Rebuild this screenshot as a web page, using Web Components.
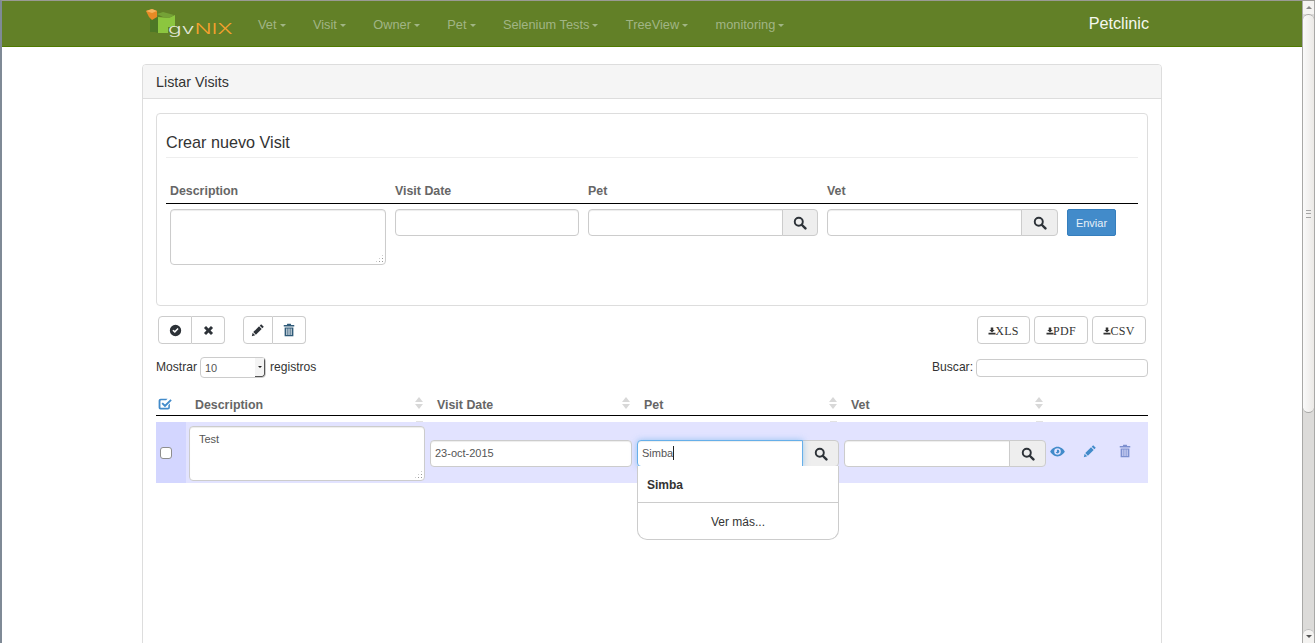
<!DOCTYPE html>
<html lang="es">
<head>
<meta charset="utf-8">
<title>Petclinic</title>
<style>
  html, body { margin: 0; height: 643px; overflow: hidden; background: #fff; }
  body { font: 12px "Liberation Sans", Arial, sans-serif; color: #333; }
</style>
</head>
<body>
<gv-page>
  <gv-navbar brand="Petclinic">
    <gv-nav-item>Vet</gv-nav-item>
    <gv-nav-item>Visit</gv-nav-item>
    <gv-nav-item>Owner</gv-nav-item>
    <gv-nav-item>Pet</gv-nav-item>
    <gv-nav-item>Selenium Tests</gv-nav-item>
    <gv-nav-item>TreeView</gv-nav-item>
    <gv-nav-item>monitoring</gv-nav-item>
  </gv-navbar>
  <gv-panel heading="Listar Visits">
    <gv-create-form></gv-create-form>
    <gv-toolbar></gv-toolbar>
    <gv-table-controls></gv-table-controls>
    <gv-visit-table></gv-visit-table>
  </gv-panel>
</gv-page>

<script>
const ICONS = {
  search: `<circle cx="6.6" cy="6.6" r="4.6" fill="none" stroke="currentColor" stroke-width="2.2"/><path d="M10 10 14.200 14.200" stroke="currentColor" stroke-width="2.8" stroke-linecap="round"/>`,
  okcircle: `<path fill-rule="evenodd" d="M8 1a7 7 0 1 1 0 14A7 7 0 0 1 8 1zM5.400 7 4.200 8.400 7.200 11l4.600-4.800-1.300-1.200-3.300 3.400z"/>`,
  remove: `<path d="M4.400 1.400 8 5l3.600-3.600 3 3L11 8l3.600 3.600-3 3L8 11l-3.600 3.600-3-3L5 8 1.400 4.400z"/>`,
  pencil: `<path d="M11.600 1.400 14.600 4.400 13 6 10 3zM9.200 3.800l3 3L5.600 13.400l-3-3zM1.900 11.200l2.900 2.900-3.900 1z"/>`,
  trash: `<path fill-rule="evenodd" d="M6 .8h4l.5 1.400H14v1.700H2V2.200h3.500zM3 5h10v10.200H3zM5 6.400v7.400h1.100V6.400zm2.400 0v7.400h1.200V6.400zm2.500 0v7.400H11V6.400z"/>`,
  download: `<path d="M5.500 1h5v5h3L8 11 2.500 6h3zM1 11.500h14V15H1z"/>`,
  eye: `<path fill-rule="evenodd" d="M8 2.800c3.600 0 6.500 2.700 7.800 5.200-1.300 2.500-4.200 5.200-7.800 5.200S1.500 10.500.2 8C1.500 5.500 4.400 2.800 8 2.800zm0 1.700a3.500 3.500 0 1 0 0 7 3.500 3.500 0 0 0 0-7zM8 6a2 2 0 1 1-1.900 2.600c.8.300 1.700-.5 1.300-1.300-.2-.4-.2-1 .6-1.300z"/>`,
  check: `<path fill-rule="evenodd" d="M3 2h8l-1.800 1.800H3.500c-.4 0-.7.300-.7.700v7.200c0 .4.300.7.700.7h7.600c.4 0 .7-.3.700-.7V9.300l1.800-1.800v4.600c0 1.300-1 2.300-2.300 2.300H3c-1.300 0-2.300-1-2.300-2.300V4.300C.7 3 1.700 2 3 2zm11.200.6 1.500 1.500L8 11.700 4 7.800l1.500-1.500L8 8.700z"/>`
};

class GvIcon extends HTMLElement {
  constructor() {
    super();
    this.attachShadow({ mode: "open" });
  }
  connectedCallback() {
    const size = this.getAttribute("size") || 14;
    this.shadowRoot.innerHTML = `
      <style>
        :host { display: inline-flex; flex: none; }
        svg { display: block; fill: currentColor; }
      </style>
      <svg width="${size}" height="${size}" viewBox="0 0 16 16">${ICONS[this.getAttribute("name")]}</svg>`;
  }
}
customElements.define("gv-icon", GvIcon);

class GvPage extends HTMLElement {
  constructor() {
    super();
    this.attachShadow({ mode: "open" });
    this.shadowRoot.innerHTML = `
      <style>
        :host { display: flex; height: 643px; overflow: hidden; box-sizing: border-box; border-top: 1px solid #9a9a94; border-left: 2px solid #7f8a96; }
        main { flex: 1; min-width: 0; }
        gv-scrollbar { flex: none; }
      </style>
      <main><slot></slot></main>
      <gv-scrollbar></gv-scrollbar>`;
  }
}

class GvScrollbar extends HTMLElement {
  constructor() {
    super();
    this.attachShadow({ mode: "open" });
    this.shadowRoot.innerHTML = `
      <style>
        :host { display: flex; flex-direction: column; width: 13px; box-sizing: border-box; height: 642px; background: #dcdbd9; border: solid #a9a9a7; border-width: 0 1px; }
        .arrow { height: 13px; background: #f4f3f1; display: flex; align-items: center; justify-content: center; flex: none; }
        .arrow i { width: 0; height: 0; border: 3.500px solid transparent; }
        .up i { border-bottom-color: #8a8a8a; border-top: 0; }
        .down i { border-top-color: #555; border-bottom: 0; }
        .thumb { height: 399px; flex: none; box-sizing: border-box; border: 1px solid #a9a9a7; border-width: 1px 0; border-radius: 6px; background: linear-gradient(90deg, #fafafa, #ebe9e6); display: flex; align-items: center; justify-content: center; }
        .thumb i { width: 5px; height: 6px; border-top: 1px solid #a5a5a5; border-bottom: 1px solid #a5a5a5; background: linear-gradient(#a5a5a5, #a5a5a5) center / 100% 1px no-repeat; }
        .track { flex: 1; }
        .down { border-radius: 6px 6px 0 0; border-top: 1px solid #bbb; }
      </style>
      <div class="arrow up"><i></i></div>
      <div class="thumb"><i></i></div>
      <div class="track"></div>
      <div class="arrow down"><i></i></div>`;
  }
}

class GvLogo extends HTMLElement {
  constructor() {
    super();
    this.attachShadow({ mode: "open" });
    this.shadowRoot.innerHTML = `
      <style>
        :host { display: flex; align-items: flex-end; height: 29px; width: 86px; flex: none; }
        svg { display: block; flex: none; align-self: flex-start; }
        .word { font: 300 14px/12px Inter, "Liberation Sans", sans-serif; margin: 0 0 0 -7px; transform: scaleX(1.62); transform-origin: left bottom; white-space: nowrap; padding-bottom: 3px; }
        .gv { color: #e4e8da; }
        .nix { color: #f7a02e; }
      </style>
      <svg width="29" height="29" viewBox="0 0 29 29">
        <path fill="#4d7826" d="M4 10l8-2v16l-3-1H4z"/>
        <path fill="#75a236" d="M11 5l6-2 11 3-5 3-6-1z"/>
        <path fill="#8cc63f" d="M12 8l11 1 6-3v12H22v6H12z"/>
        <path fill="#e88a25" d="M0 2 6 0l5 2v6l-5 3-3-3z"/>
        <path fill="#f5b35c" d="M0 2 6 0l5 2-5 2z"/>
      </svg>
      <span class="word"><span class="gv">gv</span><span class="nix">NIX</span></span>`;
  }
}

class GvNavItem extends HTMLElement {
  constructor() {
    super();
    this.attachShadow({ mode: "open" });
    this.shadowRoot.innerHTML = `
      <style>
        :host { display: inline-flex; align-items: center; padding: 1px 13.700px 0; color: #a1b585; font-size: 12.800px; white-space: nowrap; }
        i { margin-left: 3px; width: 0; height: 0; border: 3px solid transparent; border-top-color: #a1b585; border-bottom: 0; margin-top: 2px; }
      </style>
      <slot></slot><i></i>`;
  }
}

class GvNavbar extends HTMLElement {
  constructor() {
    super();
    this.attachShadow({ mode: "open" });
  }
  connectedCallback() {
    this.shadowRoot.innerHTML = `
      <style>
        :host { display: block; height: 46px; box-sizing: border-box; background: #628027; border-bottom: 1px solid #4f7a00; }
        .inner { width: 1020px; margin-left: 140px; height: 100%; display: flex; align-items: center; padding: 0 13px 0 4px; box-sizing: border-box; }
        nav { display: flex; flex: 1; height: 100%; align-items: center; padding-left: 12.300px; }
        .brand { font-size: 16.200px; color: #f5f8ee; }
      </style>
      <div class="inner">
        <gv-logo></gv-logo>
        <nav><slot></slot></nav>
        <span class="brand">${this.getAttribute("brand")}</span>
      </div>`;
  }
}

class GvPanel extends HTMLElement {
  constructor() {
    super();
    this.attachShadow({ mode: "open" });
  }
  connectedCallback() {
    this.shadowRoot.innerHTML = `
      <style>
        :host { display: block; width: 1020px; box-sizing: border-box; margin: 17px 0 0 140px; height: 640px; border: 1px solid #ddd; border-radius: 4px 4px 0 0; background: #fff; }
        header { height: 34px; box-sizing: border-box; padding: 0 13px; background: #f5f5f5; border-bottom: 1px solid #ddd; font-size: 14.300px; line-height: 35px; color: #333; border-radius: 3px 3px 0 0; }
        .body { padding: 14px 13px 0; }
      </style>
      <header>${this.getAttribute("heading")}</header>
      <div class="body"><slot></slot></div>`;
  }
}

class GvField extends HTMLElement {
  constructor() {
    super();
    this.attachShadow({ mode: "open" });
    this.shadowRoot.innerHTML = `
      <style>
        :host { display: block; box-sizing: border-box; height: 27px; min-width: 0; background: #fff; border: 1px solid #ccc; border-radius: 4px; font-size: 11px; color: #555; padding: 0 4px; line-height: 25px; white-space: nowrap; box-shadow: inset 0 1px 1px rgba(0,0,0,.075); }
        :host([area]) { line-height: 15px; padding: 5px 9px; position: relative; }
        :host([focused]) { position: relative; z-index: 1; border-color: #66afe9; box-shadow: inset 0 1px 1px rgba(0,0,0,.075), 0 0 6px rgba(102,175,233,.6); }
        .grip { display: none; position: absolute; right: 1px; bottom: 1px; width: 9px; height: 9px; background: radial-gradient(circle, #9a9a9a .6px, transparent .8px) 0 0 / 3px 3px; clip-path: polygon(100% 0, 100% 100%, 0 100%); }
        :host([area]) .grip { display: block; }
      </style>
      <slot></slot><span class="grip"></span>`;
  }
}

class GvSearch extends HTMLElement {
  constructor() {
    super();
    this.attachShadow({ mode: "open" });
  }
  connectedCallback() {
    const focused = this.hasAttribute("focused") ? "focused" : "";
    const width = this.getAttribute("btn") || 36;
    this.shadowRoot.innerHTML = `
      <style>
        :host { display: flex; position: relative; height: 27px; min-width: 0; }
        gv-field { flex: 1; border-radius: 4px 0 0 4px; }
        button { width: ${width}px; flex: none; margin: 0 0 0 -1px; padding: 0; display: flex; align-items: center; justify-content: center; background: #eee; border: 1px solid #ccc; border-radius: 0 4px 4px 0; color: #2d3238; }
        .menu { position: absolute; left: 0; right: 0; top: 26px; z-index: 5; }
      </style>
      <gv-field ${focused}><slot></slot></gv-field>
      <button><gv-icon name="search" size="14"></gv-icon></button>
      <div class="menu"><slot name="menu"></slot></div>`;
  }
}

class GvMenu extends HTMLElement {
  constructor() {
    super();
    this.attachShadow({ mode: "open" });
    this.shadowRoot.innerHTML = `
      <style>
        :host { display: block; box-sizing: border-box; height: 74px; background: #fff; border: 1px solid #ccc; border-top: 0; border-radius: 0 0 10px 10px; font-size: 12px; color: #333; }
        .hit { height: 36px; line-height: 38px; padding-left: 9px; font-weight: bold; border-bottom: 1px solid #ccc; box-sizing: content-box; }
        .more { text-align: center; line-height: 38px; }
      </style>
      <div class="hit">Simba</div>
      <div class="more">Ver más...</div>`;
  }
}

class GvCreateForm extends HTMLElement {
  constructor() {
    super();
    this.attachShadow({ mode: "open" });
    this.shadowRoot.innerHTML = `
      <style>
        :host { display: block; box-sizing: border-box; height: 193px; border: 1px solid #ddd; border-radius: 4px; padding: 17px 9px 0; }
        h3 { margin: 0; font: normal 16.200px/22px "Liberation Sans", sans-serif; color: #333; padding-bottom: 4px; border-bottom: 1px solid #eee; }
        .grid { display: grid; grid-template-columns: 225px 193px 239px 240px 75px; }
        .head { border-bottom: 1px solid #000; margin: 0; height: 46px; grid-column: 1 / -1; display: grid; grid-template-columns: inherit; box-sizing: border-box; }
        .head span { font-weight: bold; font-size: 12.400px; color: #666; padding: 26px 0 0 4px; line-height: 15px; }
        .inputs { margin: 5px 0 0; grid-column: 1 / -1; display: grid; grid-template-columns: inherit; align-items: start; }
        .inputs > * { margin-left: 4px; margin-right: 5px; }
        gv-field[area] { height: 56px; }
        button { width: 49px; height: 27px; padding: 0; background: #428bca; border: 1px solid #357ebd; border-radius: 2px; color: #e8f0f8; font: 11px "Liberation Sans", sans-serif; margin-right: 0; }
      </style>
      <h3>Crear nuevo Visit</h3>
      <div class="grid">
        <div class="head"><span>Description</span><span>Visit Date</span><span>Pet</span><span>Vet</span></div>
        <div class="inputs">
          <gv-field area></gv-field>
          <gv-field></gv-field>
          <gv-search></gv-search>
          <gv-search btn="37"></gv-search>
          <button>Enviar</button>
        </div>
      </div>`;
  }
}

class GvToolbar extends HTMLElement {
  constructor() {
    super();
    this.attachShadow({ mode: "open" });
    this.shadowRoot.innerHTML = `
      <style>
        :host { display: flex; height: 28px; margin-top: 10px; padding: 0 2px; color: #2d3238; }
        .group { display: flex; margin-right: 18px; }
        .group button { height: 28px; background: #fff; border: 1px solid #ccc; padding: 0; display: flex; align-items: center; justify-content: center; color: #2d3238; }
        .group button:first-child { border-radius: 4px 0 0 4px; }
        .group button:last-child { border-radius: 0 4px 4px 0; border-left: 0; }
        .w1 { width: 34px; } .w2 { width: 33px; } .w3 { width: 30px; }
        .group button.trash { color: #2f5a78; }
        .spacer { flex: 1; }
        .exports { display: flex; gap: 4px; }
        .exports button { height: 28px; background: #fff; border: 1px solid #ccc; border-radius: 4px; padding: 2px 0 0; display: flex; align-items: center; justify-content: center; font: 12px "Liberation Serif", serif; letter-spacing: .3px; color: #333; }
        .exports gv-icon { margin-right: -1px; }
      </style>
      <div class="group">
        <button class="w1"><gv-icon name="okcircle" size="13"></gv-icon></button>
        <button class="w2"><gv-icon name="remove" size="11"></gv-icon></button>
      </div>
      <div class="group">
        <button class="w3"><gv-icon name="pencil" size="14"></gv-icon></button>
        <button class="w2 trash"><gv-icon name="trash" size="14"></gv-icon></button>
      </div>
      <div class="spacer"></div>
      <div class="exports">
        <button style="width:53px"><gv-icon name="download" size="8"></gv-icon>XLS</button>
        <button style="width:54px"><gv-icon name="download" size="8"></gv-icon>PDF</button>
        <button style="width:54px"><gv-icon name="download" size="8"></gv-icon>CSV</button>
      </div>`;
  }
}

class GvTableControls extends HTMLElement {
  constructor() {
    super();
    this.attachShadow({ mode: "open" });
    this.shadowRoot.innerHTML = `
      <style>
        :host { display: flex; align-items: center; height: 21px; margin-top: 13px; font-size: 12.100px; color: #333; }
        .label { position: relative; top: -1px; }
        .select { box-sizing: border-box; width: 66px; height: 21px; margin: 0 4px 0 3px; border: 1px solid #ccc; border-radius: 4px; display: flex; font-size: 11px; color: #555; line-height: 21px; padding-left: 4px; justify-content: space-between; overflow: hidden; }
        .caret { width: 9px; background: #f4f4f4; border-right: 1px solid #555; border-bottom: 1px solid #555; border-radius: 0 0 3px 0; display: flex; align-items: center; justify-content: center; }
        .caret i { width: 0; height: 0; border: 2.500px solid transparent; border-top-color: #222; border-bottom: 0; }
        .spacer { flex: 1; }
        .search { box-sizing: border-box; width: 172px; height: 18px; margin-left: 3px; border: 1px solid #ccc; border-radius: 4px; }
      </style>
      <span class="label">Mostrar</span>
      <div class="select"><span>10</span><span class="caret"><i></i></span></div>
      <span class="label">registros</span>
      <div class="spacer"></div>
      <span class="label">Buscar:</span>
      <div class="search"></div>`;
  }
}

class GvSortHead extends HTMLElement {
  constructor() {
    super();
    this.attachShadow({ mode: "open" });
    this.shadowRoot.innerHTML = `
      <style>
        :host { display: flex; align-items: center; justify-content: space-between; height: 23px; padding: 2px 5px 0 9px; box-sizing: border-box; font-weight: bold; color: #666; font-size: 12.400px; }
        .sort { display: flex; flex-direction: column; gap: 2px; margin-top: -3px; }
        .sort i { width: 0; height: 0; border: 4px solid transparent; }
        .sort i:first-child { border-bottom: 5px solid #d8d8d8; border-top: 0; }
        .sort i:last-child { border-top: 5px solid #d8d8d8; border-bottom: 0; }
      </style>
      <span><slot></slot></span>
      <span class="sort"><i></i><i></i></span>`;
  }
}

class GvVisitTable extends HTMLElement {
  constructor() {
    super();
    this.attachShadow({ mode: "open" });
    this.shadowRoot.innerHTML = `
      <style>
        :host { display: block; margin-top: 14px; --cols: 30px 242px 207px 207px 206px 100px; }
        .head { display: grid; grid-template-columns: var(--cols); border-bottom: 1px solid #000; height: 24px; box-sizing: border-box; }
        .all { color: #428bca; padding: 5px 0 0 2px; }
        .bits { display: grid; grid-template-columns: var(--cols); height: 6px; align-items: end; }
        .bits i { display: block; height: 1px; width: 7px; background: #e2e2e2; justify-self: end; margin-right: 5px; }
        .row { display: grid; grid-template-columns: var(--cols); height: 61px; background: #e2e3ff; align-items: start; }
        .pick { background: #d3d6ff; height: 61px; box-sizing: border-box; padding: 25px 0 0 4px; }
        .box { display: block; width: 12px; height: 12px; box-sizing: border-box; background: #fff; border: 1px solid #8e8e8e; border-radius: 3px; }
        .cell { padding: 18px 3px 0 2px; min-width: 0; }
        .first { padding: 4px 3px 0 3px; }
        .last { padding-right: 2px; }
        gv-field[area] { height: 55px; }
        .actions { display: flex; color: #428bca; padding-top: 22px; }
        .actions gv-icon:nth-child(1) { margin: 0 0 0 2px; }
        .actions gv-icon:nth-child(2) { margin-left: 18px; }
        .actions gv-icon:nth-child(3) { margin-left: 21px; color: #7c8fcf; }
        .cursor { display: inline-block; width: 1px; height: 14px; background: #222; vertical-align: -3px; }
      </style>
      <div class="head">
        <div class="all"><gv-icon name="check" size="14"></gv-icon></div>
        <gv-sort-head>Description</gv-sort-head>
        <gv-sort-head>Visit Date</gv-sort-head>
        <gv-sort-head>Pet</gv-sort-head>
        <gv-sort-head>Vet</gv-sort-head>
        <div></div>
      </div>
      <div class="bits"><div></div><i></i><div></div><i></i><i></i><div></div></div>
      <div class="row">
        <div class="pick"><span class="box"></span></div>
        <div class="cell first"><gv-field area>Test</gv-field></div>
        <div class="cell"><gv-field>23-oct-2015</gv-field></div>
        <div class="cell">
          <gv-search focused btn="37">Simba<span class="cursor"></span><gv-menu slot="menu"></gv-menu></gv-search>
        </div>
        <div class="cell last"><gv-search btn="37"></gv-search></div>
        <div class="actions">
          <gv-icon name="eye" size="15"></gv-icon>
          <gv-icon name="pencil" size="14"></gv-icon>
          <gv-icon name="trash" size="14"></gv-icon>
        </div>
      </div>`;
  }
}

customElements.define("gv-page", GvPage);
customElements.define("gv-scrollbar", GvScrollbar);
customElements.define("gv-logo", GvLogo);
customElements.define("gv-nav-item", GvNavItem);
customElements.define("gv-navbar", GvNavbar);
customElements.define("gv-panel", GvPanel);
customElements.define("gv-field", GvField);
customElements.define("gv-search", GvSearch);
customElements.define("gv-menu", GvMenu);
customElements.define("gv-create-form", GvCreateForm);
customElements.define("gv-toolbar", GvToolbar);
customElements.define("gv-table-controls", GvTableControls);
customElements.define("gv-sort-head", GvSortHead);
customElements.define("gv-visit-table", GvVisitTable);
</script>
</body>
</html>
